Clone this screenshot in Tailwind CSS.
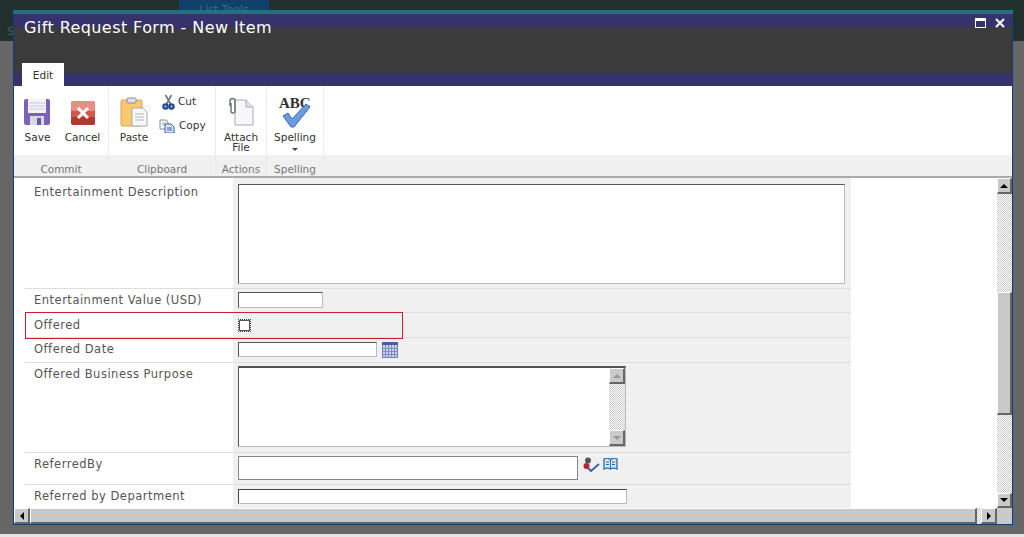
<!DOCTYPE html>
<html><head><meta charset="utf-8"><title>Gift Request Form</title>
<script src="https://cdn.jsdelivr.net/npm/@tailwindcss/browser@4"></script></head>
<body class="m-0">
<div class="relative w-[1024px] h-[537px] overflow-hidden bg-[#666666] font-['DejaVu_Sans',sans-serif] text-[11px] text-[#444]">
  <!-- page behind -->
  <div class="absolute inset-x-0 top-0 h-[41px] bg-[#22302f]"></div>
  <div class="absolute left-[179px] top-0 w-[90px] h-[10px] bg-[#12406a] text-[#3d6a8c] text-center leading-[20px]">List Tools</div>
  <div class="absolute left-[7px] top-[24px] text-[#555]">S</div>
  <div class="absolute inset-x-0 bottom-0 h-[3px] bg-[#e4e4e4]"></div>

  <!-- dialog window -->
  <div class="absolute left-[13px] top-[10px] w-[1000px] h-[515px] flex flex-col bg-white border-x border-b border-[#0b3f78]">
    <div class="h-[4px] bg-[#24707f] -mx-px shrink-0"></div>
    <div class="h-[13px] bg-[#36326b] shrink-0 relative"></div>
    <div class="h-[46px] bg-[#3b3b3b] shrink-0"></div>
    <div class="h-[13px] bg-[#36326b] shrink-0 relative">
      <div class="absolute left-[8px] bottom-0 w-[42px] h-[23px] bg-white text-[#333] text-center leading-[25px] text-[10.5px]">Edit</div>
    </div>

    <!-- ribbon -->
    <div class="h-[92px] shrink-0 flex border-b-2 border-[#a9a9a9] bg-white">
      <div class="w-[95px] flex flex-col border-r border-[#ececec]">
        <div class="h-[69px] shrink-0 flex pl-[8px] gap-[15px] pt-[12px]">
          <div class="flex flex-col items-center w-[29px]">
            <svg width="28" height="28" viewBox="0 0 28 28"><rect x="1" y="1" width="26" height="26" rx="2" fill="#7b62b8"/><rect x="5" y="1" width="18" height="14" fill="#f2f2f8"/><path d="M6 5h16M6 8h16M6 11h16" stroke="#c9c9d9"/><rect x="7" y="18" width="14" height="9" fill="#d8d8e0"/><rect x="14" y="20" width="4" height="7" fill="#6a5aa0"/></svg>
            <span class="mt-[5px] pl-[2px] leading-[13px] text-[10.5px] text-[#333]">Save</span>
          </div>
          <div class="flex flex-col items-center w-[33px]">
            <svg width="26" height="28" viewBox="0 0 26 28"><rect x="1" y="3" width="24" height="24" rx="3" fill="#d2574c"/><rect x="1" y="3" width="24" height="10" rx="2" fill="#e88f85"/><rect x="1" y="19" width="24" height="8" rx="2" fill="#b03a30"/><path d="M8 10l10 10M18 10L8 20" stroke="#fff" stroke-width="3"/></svg>
            <span class="mt-[5px] leading-[13px] text-[10.5px] text-[#333]">Cancel</span>
          </div>
        </div>
        <div class="h-[21px] shrink-0 bg-[#f0f0f0] text-center text-[#777] text-[10.5px] leading-[28px]">Commit</div>
      </div>
      <div class="w-[107px] flex flex-col border-r border-[#ececec]">
        <div class="h-[69px] shrink-0 flex pl-[11px] pt-[11px]">
          <div class="flex flex-col items-center w-[28px]">
            <svg width="28" height="30" viewBox="0 0 28 30"><rect x="1" y="3" width="21" height="26" rx="1" fill="#fbc86e" stroke="#c9a468"/><rect x="7" y="1" width="9" height="5" rx="1" fill="#dfe3e8" stroke="#8d8d8d"/><path d="M12 11h11l4 4v14H12z" fill="#f8f8f8" stroke="#a8a8b0"/><path d="M15 17h9M15 20h9M15 23h9" stroke="#b5b5bb"/></svg>
            <span class="mt-[4px] leading-[13px] text-[10.5px] text-[#333]">Paste</span>
          </div>
          <div class="flex flex-col ml-[11px] -mt-[3px] gap-[8px]">
            <div class="flex items-center h-[16px] gap-[3px]">
              <svg class="ml-[3px]" width="13" height="16" viewBox="0 0 13 16"><path d="M3.500 1l5 9M9.500 1l-5 9" stroke="#6f747d" stroke-width="1.6"/><circle cx="3.500" cy="12.500" r="2.300" fill="#7f9ccc" stroke="#1f4488" stroke-width="1.8"/><circle cx="9.500" cy="12.500" r="2.300" fill="#7f9ccc" stroke="#1f4488" stroke-width="1.8"/></svg>
              <span class="text-[10.5px] text-[#333]">Cut</span>
            </div>
            <div class="flex items-center h-[16px] gap-[4px]">
              <svg width="16" height="14" viewBox="0 0 16 14"><path d="M1 1h6l2 2v7H1z" fill="#fff" stroke="#7b8ea8"/><path d="M3 4h4M3 6h4" stroke="#9aa8bc"/><path d="M6 5h6l3 3v6H6z" fill="#dbe6f5" stroke="#37609c"/><path d="M8 9h5M8 11h5" stroke="#37609c"/></svg>
              <span class="text-[10.5px] text-[#333]">Copy</span>
            </div>
          </div>
        </div>
        <div class="h-[21px] shrink-0 bg-[#f0f0f0] text-center text-[#777] text-[10.5px] leading-[28px]">Clipboard</div>
      </div>
      <div class="w-[51px] flex flex-col border-r border-[#ececec]">
        <div class="h-[69px] shrink-0 flex flex-col items-center pt-[11px]">
          <svg width="28" height="30" viewBox="0 0 28 30"><path d="M8 3h11l7 7v18H8z" fill="#f7f7fb" stroke="#a9aab6"/><path d="M19 3v7h7" fill="#e4e4ea" stroke="#a9aab6"/><path d="M3 9V4a2.500 2.500 0 0 1 5 0v10a2 2 0 0 1-4 0V6" fill="none" stroke="#6f747c" stroke-width="1.500"/></svg>
          <span class="mt-[5px] leading-[10px] text-[10.5px] text-[#333] text-center">Attach<br>File</span>
        </div>
        <div class="h-[21px] shrink-0 bg-[#f0f0f0] text-center text-[#777] text-[10.5px] leading-[28px]">Actions</div>
      </div>
      <div class="w-[57px] flex flex-col border-r border-[#ececec]">
        <div class="h-[69px] shrink-0 flex flex-col items-center pt-[9px]">
          <div class="relative w-[34px] h-[33px]">
            <span class="absolute left-[1px] top-0 font-['Liberation_Serif',serif] font-bold text-[15px] leading-[16px] text-[#333]">ABC</span>
            <svg class="absolute left-[3px] top-[8px]" width="30" height="25" viewBox="0 0 30 25"><path d="M2 13l5-3 4 6L25 1l4 3-16 20h-3z" fill="#6a9be0" stroke="#3e6db3"/></svg>
          </div>
          <span class="mt-[3px] leading-[13px] text-[10.5px] text-[#333]">Spelling</span>
          <span class="mt-[4px] w-0 h-0 border-x-[3px] border-x-transparent border-t-[3px] border-t-[#444]"></span>
        </div>
        <div class="h-[21px] shrink-0 bg-[#f0f0f0] text-center text-[#777] text-[10.5px] leading-[28px]">Spelling</div>
      </div>
      <div class="flex-1 flex flex-col"><div class="h-[69px] shrink-0"></div><div class="h-[21px] shrink-0 bg-[#f0f0f0]"></div></div>
    </div>

    <!-- body -->
    <div class="flex-1 min-h-0 flex flex-col relative">
      <div class="flex-1 min-h-0 flex">
        <div class="w-[983px] overflow-hidden text-[#555] text-[11.5px] tracking-[0.5px]">
          <div class="w-[826px] ml-[11px] grid grid-cols-[208px_618px] grid-rows-[111px_24px_25px_25px_90px_32px_24px]">
            <div class="pl-[9px] pt-[7px] leading-[14px] border-b border-[#ddd]">Entertainment Description</div>
            <div class="bg-[#f0f0f0] pl-[5px] pt-[6px] border-b border-[#ddd]"><div class="w-[607px] h-[100px] bg-white border border-[#bbb] border-t-[#555] border-l-[#555]"></div></div>
            <div class="pl-[9px] pt-[4px] leading-[14px] border-b border-[#ddd]">Entertainment Value (USD)</div>
            <div class="bg-[#f0f0f0] pl-[5px] pt-[3px] border-b border-[#ddd]"><div class="w-[85px] h-[16px] bg-white border border-[#bbb] border-t-[#555] border-l-[#555]"></div></div>
            <div class="pl-[9px] pt-[5px] leading-[14px] border-b border-[#ddd]">Offered</div>
            <div class="bg-[#f0f0f0] pl-[6px] pt-[7px] border-b border-[#ddd]"><div class="w-[11px] h-[11px] bg-white border border-[#555] outline-1 outline-dotted outline-[#333]"></div></div>
            <div class="pl-[9px] pt-[4px] leading-[14px] border-b border-[#ddd]">Offered Date</div>
            <div class="bg-[#f0f0f0] pl-[5px] pt-[4px] border-b border-[#ddd] flex items-start">
              <div class="w-[139px] h-[15px] bg-white border border-[#bbb] border-t-[#555] border-l-[#555]"></div>
              <svg class="ml-[5px]" width="16" height="16" viewBox="0 0 16 16"><rect x="0.5" y="0.5" width="15" height="15" fill="#c6d3ee" stroke="#6d7fa8"/><rect x="0" y="0" width="16" height="3" fill="#4a5f96"/><path d="M0 6.500h16M0 9.500h16M0 12.500h16M3.500 3v13M6.500 3v13M9.500 3v13M12.500 3v13" stroke="#7d8cc0"/></svg>
            </div>
            <div class="pl-[9px] pt-[4px] leading-[14px] border-b border-[#ddd]">Offered Business Purpose</div>
            <div class="bg-[#f0f0f0] pl-[5px] pt-[3px] border-b border-[#ddd]">
              <div class="w-[388px] h-[81px] bg-white border border-[#bbb] border-t-2 border-t-[#555] border-l-[#555] flex justify-end">
                <div class="w-[16px] flex flex-col justify-between bg-[repeating-conic-gradient(#c8c8c8_0_25%,#fff_0_50%)] bg-[length:2px_2px]">
                  <div class="h-[16px] bg-[#c9c9c9] border-t border-l border-white border-r-2 border-b-2 border-r-[#666] border-b-[#666] flex items-center justify-center"><span class="w-0 h-0 border-x-[4px] border-x-transparent border-b-[4px] border-b-[#999]"></span></div>
                  <div class="h-[16px] bg-[#c9c9c9] border-t border-l border-white border-r-2 border-b-2 border-r-[#666] border-b-[#666] flex items-center justify-center"><span class="w-0 h-0 border-x-[4px] border-x-transparent border-t-[4px] border-t-[#999]"></span></div>
                </div>
              </div>
            </div>
            <div class="pl-[9px] pt-[4px] leading-[14px] border-b border-[#ddd]">ReferredBy</div>
            <div class="bg-[#f0f0f0] pl-[5px] pt-[3px] border-b border-[#ddd] flex items-start">
              <div class="w-[340px] h-[24px] bg-white border border-[#888]"></div>
              <svg class="ml-[5px] mt-[1px]" width="17" height="15" viewBox="0 0 17 15"><circle cx="5" cy="3.500" r="3" fill="#555"/><circle cx="3.500" cy="9" r="3" fill="#b8232a"/><path d="M5 11l3 3 8-7" fill="none" stroke="#3a62ae" stroke-width="2"/></svg>
              <svg class="ml-[3px] mt-[2px]" width="15" height="12" viewBox="0 0 15 12"><path d="M1 1c2-1 5-1 6.500 1C9 0 12 0 14 1v10c-2-1-5-1-6.500 0C6 10 3 10 1 11z" fill="#d5e5f6" stroke="#2f6ca5" stroke-width="1.300"/><path d="M7.500 2v9M3 4h3M3 6.500h3M9 4h3M9 6.500h3" stroke="#2f6ca5"/></svg>
            </div>
            <div class="pl-[9px] pt-[4px] leading-[14px]">Referred by Department</div>
            <div class="bg-[#f0f0f0] pl-[5px] pt-[4px]"><div class="w-[389px] h-[15px] bg-white border border-[#bbb] border-t-[#444] border-l-[#444]"></div></div>
          </div>
        </div>
        <!-- vertical scrollbar -->
        <div class="w-[15px] flex flex-col bg-[repeating-conic-gradient(#c8c8c8_0_25%,#fff_0_50%)] bg-[length:2px_2px]">
          <div class="h-[16px] bg-[#c9c9c9] border-t border-l border-white border-r-2 border-b-2 border-r-[#666] border-b-[#666] flex items-center justify-center"><span class="w-0 h-0 border-x-[4px] border-x-transparent border-b-[4px] border-b-black"></span></div>
          <div class="h-[98px]"></div>
          <div class="h-[123px] bg-[#c9c9c9] border-t border-l border-white border-r-2 border-b-2 border-r-[#666] border-b-[#666]"></div>
          <div class="flex-1"></div>
          <div class="h-[15px] bg-[#c9c9c9] border-t border-l border-white border-r-2 border-b-2 border-r-[#666] border-b-[#666] flex items-center justify-center"><span class="w-0 h-0 border-x-[4px] border-x-transparent border-t-[4px] border-t-black"></span></div>
        </div>
      </div>
      <!-- horizontal scrollbar -->
      <div class="h-[16px] shrink-0 flex bg-[repeating-conic-gradient(#c8c8c8_0_25%,#fff_0_50%)] bg-[length:2px_2px]">
        <div class="w-[16px] bg-[#c9c9c9] border-t border-l border-white border-r-2 border-b-2 border-r-[#666] border-b-[#666] flex items-center justify-center"><span class="w-0 h-0 border-y-[4px] border-y-transparent border-r-[4px] border-r-black"></span></div>
        <div class="w-[947px] bg-[#c9c7c7] border-t border-l border-white border-r-2 border-b-2 border-r-[#666] border-b-[#666]"></div>
        <div class="w-[4px]"></div>
        <div class="w-[16px] bg-[#c9c9c9] border-t border-l border-white border-r-2 border-b-2 border-r-[#666] border-b-[#666] flex items-center justify-center"><span class="w-0 h-0 border-y-[4px] border-y-transparent border-l-[4px] border-l-black"></span></div>
        <div class="flex-1 bg-[#c9c9c9]"></div>
      </div>
    </div>
  </div>

  <!-- title overlay on the bands -->
  <div class="absolute left-[24px] top-[18px] text-white text-[16px] leading-[20px] tracking-[0.42px]">Gift Request Form - New Item</div>
  <div class="absolute left-[975px] top-[18px] w-[11px] h-[10px] border border-white border-t-[3px] bg-[#36326b]"></div>
  <svg class="absolute left-[995px] top-[18px]" width="10" height="10" viewBox="0 0 10 10"><path d="M1 1l8 8M9 1L1 9" stroke="#f4f4f4" stroke-width="2.200"/></svg>
  <!-- annotation -->
  <div class="absolute left-[25px] top-[312px] w-[378px] h-[27px] border border-[#c8202f]"></div>
</div>
</body></html>
